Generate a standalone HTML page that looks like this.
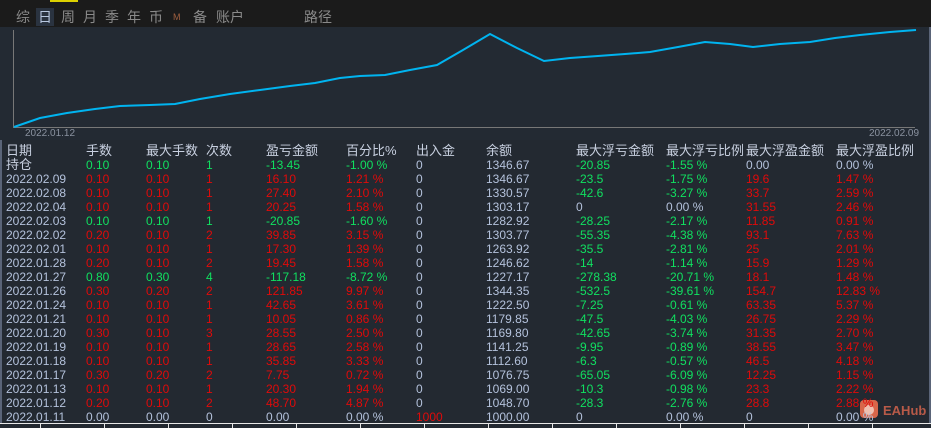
<!DOCTYPE html>
<html><head><meta charset="utf-8"><style>
*{margin:0;padding:0;box-sizing:border-box}
body{width:931px;height:428px;overflow:hidden;background:#232931;font-family:"Liberation Sans","Noto Sans CJK SC",sans-serif;position:relative}
.top{position:absolute;left:0;top:0;width:931px;height:27px;background:#1b1b1b}
.tab{position:absolute;top:8px;font-size:14px;line-height:18px;color:#8a8a8a}
.sel{background:#2a3340;color:#b8c8e0;padding:0 2px}
.chart{position:absolute;left:0;top:27px;width:931px;height:113px;background:#232a33}
.t{position:absolute;font-size:12px;line-height:14px;white-space:nowrap}
.w{color:#b4c2dc}.g{color:#10e060}.r{color:#e00a0a}.h{color:#c8d0e0;font-size:13px}
</style></head><body>
<div class="top">
<div style="position:absolute;left:50px;top:0;width:28px;height:2px;background:#dcd000"></div>
<span class="tab" style="left:16px">综</span>
<span class="tab sel" style="left:36px">日</span>
<span class="tab" style="left:61px">周</span>
<span class="tab" style="left:83px">月</span>
<span class="tab" style="left:105px">季</span>
<span class="tab" style="left:127px">年</span>
<span class="tab" style="left:149px">币</span>
<span class="tab" style="left:173px;font-size:9px;top:12px;line-height:10px;color:#a06040">M</span>
<span class="tab" style="left:193px">备</span>
<span class="tab" style="left:216px">账户</span>
<span class="tab" style="left:304px">路径</span>
</div>
<div class="chart"></div>
<svg style="position:absolute;left:0;top:0" width="931" height="428">
<line x1="13.5" y1="30" x2="13.5" y2="128" stroke="#777" stroke-width="1"/>
<line x1="13" y1="127.5" x2="915" y2="127.5" stroke="#777" stroke-width="1"/>
<polyline fill="none" stroke="#00b4f0" stroke-width="2" points="14,127 40,118 67,113 95,109 120,106 150,105 175,104 200,99 230,94 260,90 290,86 315,83 340,78 360,76 385,75 410,70 437,65 463,50 490,34 517,48 544,61 570,58 598,56 625,54 650,52 678,47 705,42 730,44 753,47 780,44 810,42 835,38 860,35 890,32 916,30"/>
<line x1="0" y1="423.5" x2="931" y2="423.5" stroke="#e8e8e8" stroke-width="1"/>
<g stroke="#e8e8e8"><line x1="40.5" y1="423" x2="40.5" y2="428"/><line x1="104.5" y1="423" x2="104.5" y2="428"/><line x1="168.5" y1="423" x2="168.5" y2="428"/><line x1="232.5" y1="423" x2="232.5" y2="428"/><line x1="296.5" y1="423" x2="296.5" y2="428"/><line x1="360.5" y1="423" x2="360.5" y2="428"/><line x1="424.5" y1="423" x2="424.5" y2="428"/><line x1="488.5" y1="423" x2="488.5" y2="428"/><line x1="552.5" y1="423" x2="552.5" y2="428"/><line x1="616.5" y1="423" x2="616.5" y2="428"/><line x1="680.5" y1="423" x2="680.5" y2="428"/><line x1="744.5" y1="423" x2="744.5" y2="428"/><line x1="808.5" y1="423" x2="808.5" y2="428"/><line x1="872.5" y1="423" x2="872.5" y2="428"/></g>
<rect x="0" y="140" width="2" height="283" fill="#5a6478"/>
<rect x="929" y="27" width="2" height="396" fill="#5a6478"/>
<rect x="860" y="400" width="18" height="18" rx="4" fill="#d8664a"/>
<circle cx="869" cy="410" r="5" fill="#f0c0b0"/>
<text x="883" y="415" font-family="Liberation Sans" font-weight="bold" font-size="13" fill="#b85a48">EAHub</text>
</svg>
<div class="t" style="left:25px;top:127px;font-size:10px;color:#8a92a0">2022.01.12</div>
<div class="t" style="left:869px;top:127px;font-size:10px;color:#8a92a0">2022.02.09</div>
<div id="tbl"></div>
<script>
var cols=[6,86,146,206,266,346,416,486,576,666,746,836];
var H=["日期","手数","最大手数","次数","盈亏金额","百分比%","出入金","余额","最大浮亏金额","最大浮亏比例","最大浮盈金额","最大浮盈比例"];
var R=[
["持仓","g0.10","g0.10","g1","g-13.45","g-1.00 %","w0","w1346.67","g-20.85","g-1.55 %","w0.00","w0.00 %"],
["2022.02.09","r0.10","r0.10","r1","r16.10","r1.21 %","w0","w1346.67","g-23.5","g-1.75 %","r19.6","r1.47 %"],
["2022.02.08","r0.10","r0.10","r1","r27.40","r2.10 %","w0","w1330.57","g-42.6","g-3.27 %","r33.7","r2.59 %"],
["2022.02.04","r0.10","r0.10","r1","r20.25","r1.58 %","w0","w1303.17","w0","w0.00 %","r31.55","r2.46 %"],
["2022.02.03","g0.10","g0.10","g1","g-20.85","g-1.60 %","w0","w1282.92","g-28.25","g-2.17 %","r11.85","r0.91 %"],
["2022.02.02","r0.20","r0.10","r2","r39.85","r3.15 %","w0","w1303.77","g-55.35","g-4.38 %","r93.1","r7.63 %"],
["2022.02.01","r0.10","r0.10","r1","r17.30","r1.39 %","w0","w1263.92","g-35.5","g-2.81 %","r25","r2.01 %"],
["2022.01.28","r0.20","r0.10","r2","r19.45","r1.58 %","w0","w1246.62","g-14","g-1.14 %","r15.9","r1.29 %"],
["2022.01.27","g0.80","g0.30","g4","g-117.18","g-8.72 %","w0","w1227.17","g-278.38","g-20.71 %","r18.1","r1.48 %"],
["2022.01.26","r0.30","r0.20","r2","r121.85","r9.97 %","w0","w1344.35","g-532.5","g-39.61 %","r154.7","r12.83 %"],
["2022.01.24","r0.10","r0.10","r1","r42.65","r3.61 %","w0","w1222.50","g-7.25","g-0.61 %","r63.35","r5.37 %"],
["2022.01.21","r0.10","r0.10","r1","r10.05","r0.86 %","w0","w1179.85","g-47.5","g-4.03 %","r26.75","r2.29 %"],
["2022.01.20","r0.30","r0.10","r3","r28.55","r2.50 %","w0","w1169.80","g-42.65","g-3.74 %","r31.35","r2.70 %"],
["2022.01.19","r0.10","r0.10","r1","r28.65","r2.58 %","w0","w1141.25","g-9.95","g-0.89 %","r38.55","r3.47 %"],
["2022.01.18","r0.10","r0.10","r1","r35.85","r3.33 %","w0","w1112.60","g-6.3","g-0.57 %","r46.5","r4.18 %"],
["2022.01.17","r0.30","r0.20","r2","r7.75","r0.72 %","w0","w1076.75","g-65.05","g-6.09 %","r12.25","r1.15 %"],
["2022.01.13","r0.10","r0.10","r1","r20.30","r1.94 %","w0","w1069.00","g-10.3","g-0.98 %","r23.3","r2.22 %"],
["2022.01.12","r0.20","r0.10","r2","r48.70","r4.87 %","w0","w1048.70","g-28.3","g-2.76 %","r28.8","r2.88 %"],
["2022.01.11","w0.00","w0.00","w0","w0.00","w0.00 %","r1000","w1000.00","w0","w0.00 %","w0","w0.00 %"]];
var s="";
for(var i=0;i<12;i++)s+='<div class="t h" style="left:'+cols[i]+'px;top:144px">'+H[i]+'</div>';
for(var j=0;j<R.length;j++){var y=158+j*14;for(var i=0;i<12;i++){var v=R[j][i],c,tx;
if(i==0){c=j==0?"h":"w";tx=v;}else{c=v[0];tx=v.slice(1);}
s+='<div class="t '+c+'" style="left:'+cols[i]+'px;top:'+y+'px">'+tx+'</div>';}}
document.getElementById("tbl").innerHTML=s;
</script>
</body></html>
